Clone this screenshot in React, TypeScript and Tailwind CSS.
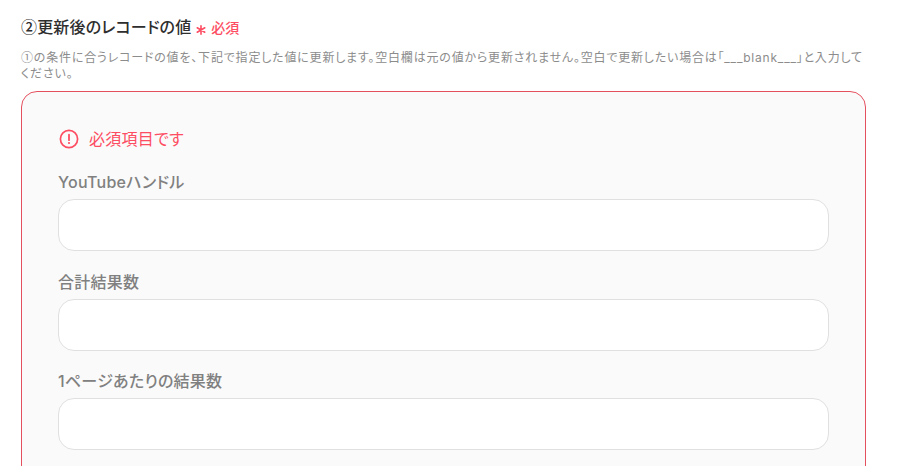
import React from "react";

const fields = ["YouTubeハンドル", "合計結果数", "1ページあたりの結果数"];
const cjk = "font-['Noto_Sans_CJK_JP',sans-serif]";

function AlertIcon() {
  return (
    <svg width="20" height="20" viewBox="0 0 20 20" fill="none" className="shrink-0">
      <circle cx="10" cy="10" r="8.6" stroke="#fd4d62" strokeWidth="1.7" />
      <path d="M10 5.6v5.6" stroke="#fd4d62" strokeWidth="1.8" strokeLinecap="round" />
      <circle cx="10" cy="14" r="1.1" fill="#fd4d62" />
    </svg>
  );
}

function RequiredMark() {
  return (
    <svg width="10" height="10" viewBox="0 0 10 10" className="shrink-0" stroke="#fd4d62" strokeWidth="1.6" strokeLinecap="round">
      <path d="M5 .8v8.4M1.2 2.8l7.6 4.4M8.8 2.8L1.2 7.2" />
    </svg>
  );
}

export default function App() {
  return (
    <div className="h-screen overflow-hidden bg-white pl-[21px] pt-[17px] font-['Inter','Noto_Sans_CJK_JP',sans-serif] [font-feature-settings:'palt']">
      <div className="w-[845px]">
        <div className="flex h-[20px] items-center">
          <span className="mb-[2px] text-[16px] font-medium leading-[20px] tracking-[0.01em] text-[#2e2e2e]">
            <span className={cjk}>②</span>更新後のレコードの値
          </span>
          <span className="ml-[5px] mt-[5px] flex">
            <RequiredMark />
          </span>
          <span className="ml-[5px] mt-[1px] text-[14px] font-medium leading-[20px] text-[#fd4d62]">必須</span>
        </div>
        <p className="mt-[12px] text-[12px] leading-[16px] tracking-[0.067em] text-[#8c8c8c]">
          <span className={cjk}>①</span>の条件に合うレコードの値を、下記で指定した値に更新します。空白欄は元の値から更新されません。空白で更新したい場合は「___blank___」と入力してください。
        </p>
        <div className="mt-[9px] h-[600px] rounded-2xl border border-[#e5505f] bg-[#fafafa] pl-[36px] pr-[36px] pt-[37px]">
          <div className="flex h-[20px] items-center gap-[10px] pl-[1px]">
            <AlertIcon />
            <span className="text-[16px] leading-[20px] tracking-[0.016em] text-[#fd4d62]">必須項目です</span>
          </div>
          <div className="mt-[21px] flex flex-col gap-[18.5px]">
            {fields.map((label) => (
              <div key={label} className="flex flex-col gap-[5px]">
                <label className="text-[16px] font-medium leading-[24px] tracking-[0.016em] text-[#808080]">{label}</label>
                <div className="h-[52px] rounded-2xl border border-[#e0e0e0] bg-white" />
              </div>
            ))}
          </div>
        </div>
      </div>
    </div>
  );
}
